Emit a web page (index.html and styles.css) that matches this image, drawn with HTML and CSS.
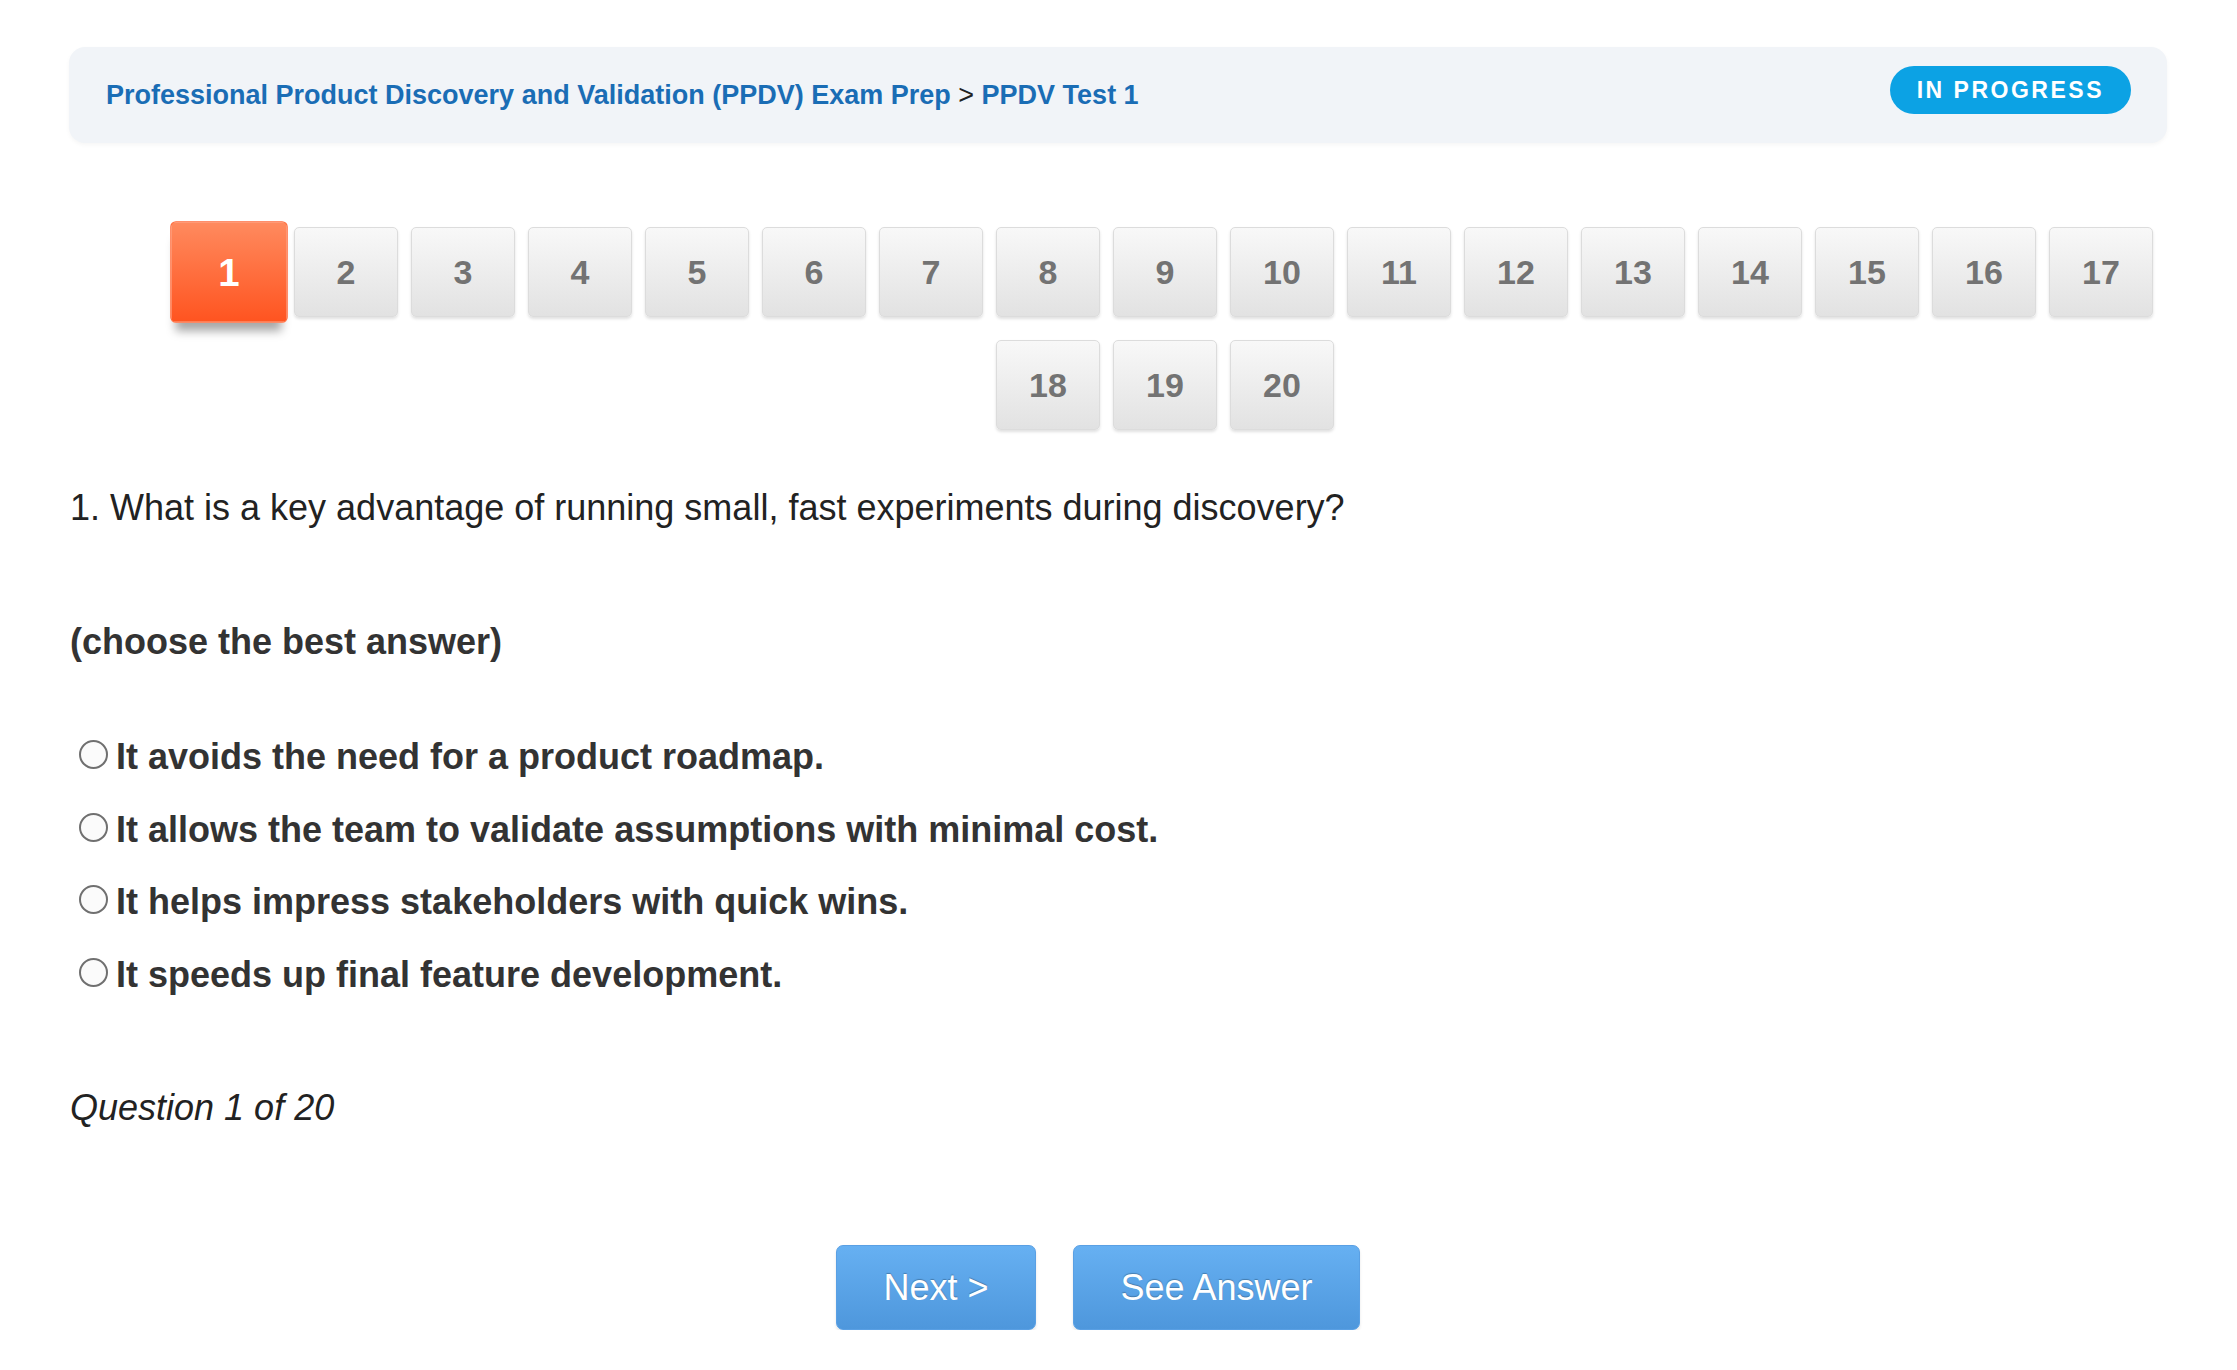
FILE: index.html
```html
<!DOCTYPE html>
<html lang="en">
<head>
    <meta charset="UTF-8">
    <meta name="viewport" content="width=device-width, initial-scale=1.0">
    <title>PPDV Test 1</title>
    <link rel="stylesheet" href="styles.css">
</head>
<body>
    <div class="page">
        <div class="crumb-bar">
            <div class="crumb">
                <a href="#">Professional Product Discovery and Validation (PPDV) Exam Prep</a>
                <span class="sep">&gt;</span>
                <a href="#">PPDV Test 1</a>
            </div>
            <span class="badge">IN PROGRESS</span>
        </div>

        <div class="pager">
            <button class="page-btn active">1</button>
            <button class="page-btn">2</button>
            <button class="page-btn">3</button>
            <button class="page-btn">4</button>
            <button class="page-btn">5</button>
            <button class="page-btn">6</button>
            <button class="page-btn">7</button>
            <button class="page-btn">8</button>
            <button class="page-btn">9</button>
            <button class="page-btn">10</button>
            <button class="page-btn">11</button>
            <button class="page-btn">12</button>
            <button class="page-btn">13</button>
            <button class="page-btn">14</button>
            <button class="page-btn">15</button>
            <button class="page-btn">16</button>
            <button class="page-btn">17</button>
            <button class="page-btn">18</button>
            <button class="page-btn">19</button>
            <button class="page-btn">20</button>
        </div>

        <p class="question">1. What is a key advantage of running small, fast experiments during discovery?</p>
        <p class="hint">(choose the best answer)</p>

        <ul class="answers">
            <li><label><input type="radio" name="q1"> It avoids the need for a product roadmap.</label></li>
            <li><label><input type="radio" name="q1"> It allows the team to validate assumptions with minimal cost.</label></li>
            <li><label><input type="radio" name="q1"> It helps impress stakeholders with quick wins.</label></li>
            <li><label><input type="radio" name="q1"> It speeds up final feature development.</label></li>
        </ul>

        <p class="counter">Question 1 of 20</p>

        <div class="actions">
            <button class="action-btn next">Next &gt;</button>
            <button class="action-btn answer">See Answer</button>
        </div>
    </div>
</body>
</html>
```

FILE: styles.css
```css
body {
    font-family: "Liberation Sans", Arial, sans-serif;
    background-color: #ffffff;
    color: #333333;
    margin: 0;
    padding: 0;
}

.page {
    padding: 47px 70px 0 69px;
}

.crumb-bar {
    display: flex;
    align-items: center;
    justify-content: space-between;
    height: 96px;
    padding: 0 36px 0 37px;
    background: #f1f4f8;
    border-radius: 16px;
    box-shadow: 0 2px 4px rgba(0, 0, 0, 0.04);
}

.crumb {
    font-size: 27px;
    font-weight: bold;
}

.crumb a {
    color: #1a6db5;
    text-decoration: none;
}

.crumb .sep {
    color: #222222;
    font-weight: normal;
}

.badge {
    background: #0ca2e4;
    color: #ffffff;
    font-size: 23px;
    font-weight: bold;
    letter-spacing: 2.5px;
    height: 48px;
    line-height: 48px;
    padding: 0 27px;
    margin-bottom: 10px;
    border-radius: 24px;
}

.pager {
    display: flex;
    flex-wrap: wrap;
    justify-content: center;
    column-gap: 13px;
    row-gap: 23px;
    margin: 84px 0 0 94px;
}

.page-btn {
    width: 104px;
    height: 90px;
    padding: 0;
    font-family: inherit;
    font-size: 34px;
    font-weight: bold;
    color: #737373;
    background: linear-gradient(#f8f8f8, #e2e2e2);
    border: 1px solid #dcdcdc;
    border-radius: 5px;
    box-shadow: 0 2px 3px rgba(0, 0, 0, 0.12);
}

.page-btn.active {
    color: #ffffff;
    background: linear-gradient(#ff8a5e, #ff5420);
    border-color: #ff6a3a;
    transform: scale(1.13);
    box-shadow: 0 12px 8px -5px rgba(0, 0, 0, 0.35);
}

.question {
    font-size: 36px;
    line-height: 40px;
    margin: 58px 0 0 1px;
    color: #222222;
}

.hint {
    font-size: 36px;
    font-weight: bold;
    line-height: 40px;
    margin: 94px 0 0 1px;
}

.answers {
    list-style: none;
    padding: 0;
    margin: 75px 0 0 0;
}

.answers li {
    font-size: 36px;
    font-weight: bold;
    line-height: 40px;
    margin-bottom: 32.7px;
}

.answers label {
    display: flex;
    align-items: center;
}

.answers input {
    appearance: none;
    -webkit-appearance: none;
    width: 29px;
    height: 29px;
    margin: 0 8px 5px 10px;
    border: 2px solid #707070;
    border-radius: 50%;
    background: #fbfbfb;
}

.counter {
    font-size: 36px;
    font-style: italic;
    line-height: 40px;
    margin: 93px 0 0 1px;
    color: #222222;
}

.actions {
    display: flex;
    justify-content: center;
    gap: 37px;
    margin: 117px 0 0 -40px;
}

.action-btn {
    height: 85px;
    padding: 0;
    font-family: inherit;
    font-size: 36px;
    color: #ffffff;
    text-shadow: 0 -1px 1px rgba(0, 0, 0, 0.25);
    background: linear-gradient(#66b0f2, #4e97dc);
    border: 1px solid #5aa0e4;
    border-radius: 7px;
    box-shadow: 0 2px 3px rgba(0, 0, 0, 0.1);
}

.action-btn.next {
    width: 200px;
}

.action-btn.answer {
    width: 287px;
}
```
